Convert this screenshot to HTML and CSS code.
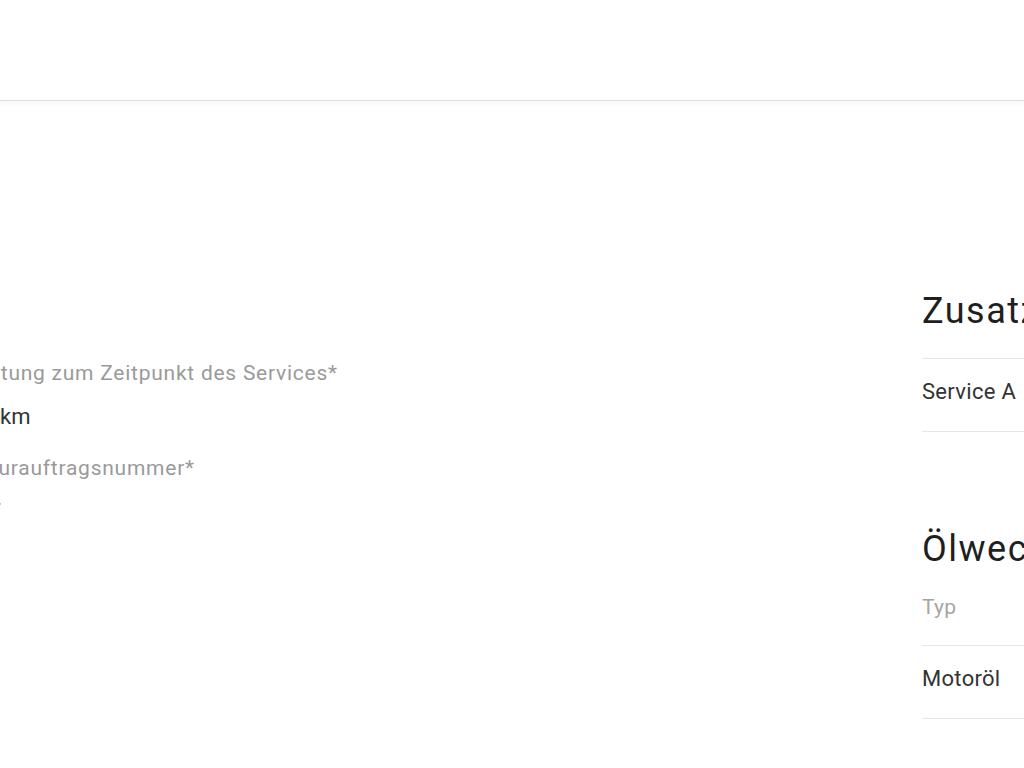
FILE: index.html
```html
<!DOCTYPE html>
<html lang="de">
	<head>
		<meta charset="UTF-8">
		<title>Service erfassen</title>
		<link rel="stylesheet" href="styles.css">
	</head>
	<body>
		<header class="topbar"></header>
		<main class="page">
			<section class="form-col">
				<div class="field">
					<div class="field-label">Laufleistung zum Zeitpunkt des Services*</div>
					<div class="field-value">12.345 km</div>
				</div>
				<div class="field">
					<div class="field-label">Reparaturauftragsnummer*</div>
					<div class="field-value">240117</div>
				</div>
			</section>
			<aside class="summary">
				<h2 class="summary-title">Zusatzleistungen</h2>
				<ul class="rows">
					<li>Service A</li>
				</ul>
				<h2 class="summary-title oil">Ölwechsel</h2>
				<div class="col-label">Typ</div>
				<ul class="rows">
					<li>Motoröl</li>
				</ul>
			</aside>
		</main>
	</body>
</html>
```

FILE: styles.css
```css
* {
	margin: 0;
	padding: 0;
	box-sizing: border-box;
}
ul, li {
	list-style: none;
}

html, body {
	width: 1024px;
	height: 768px;
	overflow: hidden;
	background: #fff;
}
body {
	font-family: Roboto, "Liberation Sans", sans-serif;
	color: #333;
}

.topbar {
	height: 101px;
	border-bottom: 1px solid #dedede;
	box-shadow: 0 2px 6px rgba(0, 0, 0, 0.04);
}

.page {
	display: flex;
	align-items: flex-start;
}

/* left form, cut by the viewport */
.form-col {
	flex: none;
	width: 995px;
	margin-left: -73px;
	padding-top: 260px;
}
.field {
	margin-bottom: 26px;
}
.field-label {
	font-size: 21px;
	line-height: 25px;
	letter-spacing: 0.75px;
	text-indent: -6px;
	color: #9a9a9a;
	margin-bottom: 18px;
	white-space: nowrap;
}
.field-value {
	font-size: 22px;
	line-height: 26px;
	color: #333;
	white-space: nowrap;
}

/* right summary */
.summary {
	flex: none;
	width: 420px;
	padding-top: 189px;
}
.summary-title {
	font-size: 36px;
	line-height: 42px;
	font-weight: 400;
	letter-spacing: 1.5px;
	color: #1f1f1f;
	white-space: nowrap;
	margin-bottom: 26px;
}
.summary-title.oil {
	margin-top: 96px;
	margin-bottom: 24px;
}
.col-label {
	font-size: 21px;
	line-height: 26px;
	letter-spacing: 0.3px;
	color: #a5a5a5;
	margin-bottom: 25px;
}
.rows li {
	font-size: 22px;
	line-height: 26px;
	letter-spacing: 0.3px;
	color: #333;
	padding: 20px 0 26px;
	border-top: 1px solid #e6e6e6;
	border-bottom: 1px solid #e6e6e6;
}
```
